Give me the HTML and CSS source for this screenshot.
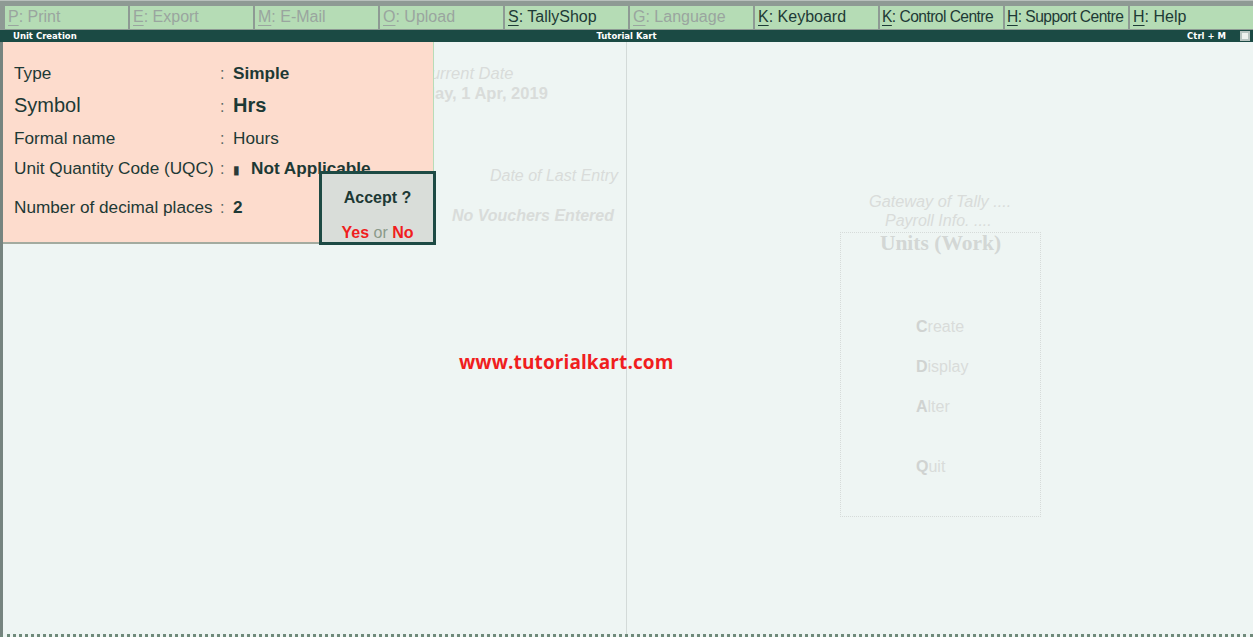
FILE: index.html
```html
<!DOCTYPE html>
<html>
<head>
<meta charset="utf-8">
<link rel="stylesheet" href="styles.css">
</head>
<body>
<div class="app">
  <div class="toolbar">
    <div class="btn off"><u>P</u>: Print</div>
    <div class="btn off"><u>E</u>: Export</div>
    <div class="btn off"><u>M</u>: E-Mail</div>
    <div class="btn off"><u>O</u>: Upload</div>
    <div class="btn"><u>S</u>: TallyShop</div>
    <div class="btn off"><u>G</u>: Language</div>
    <div class="btn"><u>K</u>: Keyboard</div>
    <div class="btn tight"><u>K</u>: Control Centre</div>
    <div class="btn tight"><u>H</u>: Support Centre</div>
    <div class="btn"><u>H</u>: Help</div>
  </div>
  <div class="titlebar">
    <span class="t-left">Unit Creation</span>
    <span class="t-center">Tutorial Kart</span>
    <span class="t-right">Ctrl + M</span>
    <span class="t-box"></span>
  </div>
  <div class="main">
    <div class="col left">
      <div class="faded cur-date">Current Date</div>
      <div class="faded cur-date-val">Monday, 1 Apr, 2019</div>
      <div class="faded last-entry">Date of Last Entry</div>
      <div class="faded no-vouchers">No Vouchers Entered</div>
      <div class="watermark">www.tutorialkart.com</div>
    </div>
    <div class="col right">
      <div class="faded gw1">Gateway of Tally ....</div>
      <div class="faded gw2">Payroll Info. ....</div>
      <div class="menu">
        <div class="menu-title">Units (Work)</div>
        <div class="menu-items">
          <div class="mi"><b>C</b>reate</div>
          <div class="mi"><b>D</b>isplay</div>
          <div class="mi"><b>A</b>lter</div>
          <div class="mi quit"><b>Q</b>uit</div>
        </div>
      </div>
    </div>

    <div class="panel">
      <div class="row"><span class="lbl">Type</span><span class="colon">:</span><span class="val bold">Simple</span></div>
      <div class="row big"><span class="lbl">Symbol</span><span class="colon">:</span><span class="val bold">Hrs</span></div>
      <div class="row short"><span class="lbl">Formal name</span><span class="colon">:</span><span class="val">Hours</span></div>
      <div class="row"><span class="lbl">Unit Quantity Code (UQC)</span><span class="colon">:</span><span class="val bold"><span class="bar">&#9646;</span>Not Applicable</span></div>
      <div class="row gap"><span class="lbl">Number of decimal places</span><span class="colon">:</span><span class="val bold">2</span></div>
    </div>
    <div class="accept">
      <div class="acc-title">Accept ?</div>
      <div class="acc-opts"><span class="red">Yes</span> <span class="or">or</span> <span class="red">No</span></div>
    </div>
  </div>
</div>
</body>
</html>
```
FILE: styles.css
```css
* { box-sizing: border-box; }
html, body { margin: 0; padding: 0; }
body {
  width: 1253px;
  height: 637px;
  overflow: hidden;
  background: #eef5f3;
  font-family: "Liberation Sans", Arial, sans-serif;
}
.app {
  width: 1253px;
  height: 637px;
  display: flex;
  flex-direction: column;
}
.toolbar {
  height: 30px;
  display: flex;
  gap: 2px;
  padding: 5px 0 2px 5px;
  background: #8e9a94;
  border-top: 1px solid #b8c0bc;
}
.btn {
  width: 123px;
  height: 23px;
  background: #b5dcb5;
  color: #1e3a36;
  font-size: 16px;
  line-height: 22px;
  padding-left: 3px;
  white-space: nowrap;
  overflow: hidden;
}
.btn.tight { letter-spacing: -0.55px; font-size: 15.6px; padding-left: 2px; }
.btn.off { color: #9aa59f; }
.btn u { text-decoration-thickness: 1px; text-underline-offset: 3px; }
.titlebar {
  height: 12px;
  background: #1b4a44;
  color: #ffffff;
  font-family: Verdana, "DejaVu Sans", sans-serif;
  font-size: 8.5px;
  font-weight: bold;
  line-height: 12px;
  display: flex;
  align-items: center;
  position: relative;
  padding-left: 13px;
}
.t-left { flex: 1; }
.t-center {
  position: absolute;
  left: 0; right: 0;
  text-align: center;
  top: 0;
}
.t-right { margin-right: 14px; }
.t-box {
  width: 10px;
  height: 10px;
  background: #eef2ee;
  border: 2px solid #b8c4c0;
  margin-right: 3px;
}
.main {
  flex: 1;
  display: flex;
  position: relative;
  border-left: 3px solid #76847f;
  border-bottom: 3px dotted #6f8a7a;
}
.col { position: relative; }
.col.left {
  width: 624px;
  border-right: 1px solid #d3dad8;
  display: flex;
  flex-direction: column;
  align-items: flex-end;
  padding-right: 8px;
}
.col.right {
  flex: 1;
  display: flex;
  flex-direction: column;
  padding-left: 213px;
}
.faded { color: #d9dcda; font-size: 16px; white-space: nowrap; }
.cur-date { font-style: italic; position: absolute; left: 416px; top: 22px; font-size: 16.5px; }
.cur-date-val { font-weight: bold; position: absolute; left: 388px; top: 42px; font-size: 16.5px; }
.last-entry { font-style: italic; margin-top: 125px; }
.no-vouchers { font-style: italic; font-weight: bold; margin-top: 22px; margin-right: 4px; }
.watermark {
  align-self: flex-start;
  margin-left: 456px;
  margin-top: 124px;
  color: #f01e1e;
  font-family: "Open Sans", sans-serif;
  font-weight: bold;
  font-size: 19px;
  letter-spacing: 0.1px;
}
.gw1 { font-style: italic; margin-top: 150px; margin-left: 29px; font-size: 16.3px; }
.gw2 { font-style: italic; margin-left: 45px; margin-top: 1px; font-size: 16px; }
.menu {
  width: 201px;
  height: 285px;
  border: 1px dotted #d6dbd9;
  margin-top: 2px;
  display: flex;
  flex-direction: column;
}
.menu-title {
  font-family: "Liberation Serif", "Times New Roman", serif;
  font-weight: bold;
  font-size: 21.5px;
  color: #d3d7d5;
  text-align: center;
  line-height: 20px;
  margin-top: 0;
}
.menu-items {
  padding-left: 75px;
  margin-top: 64px;
  display: flex;
  flex-direction: column;
  gap: 21px;
}
.mi { color: #d9dcda; font-size: 16px; line-height: 19px; }
.mi b { color: #d0d3d1; }
.mi.quit { margin-top: 20px; }
.panel {
  position: absolute;
  left: 0;
  top: 0;
  width: 431px;
  height: 202px;
  background: #fddccd;
  border-bottom: 2px solid #a3ab9f;
  border-right: 1px solid #b8dcb8;
  padding: 20px 0 0 11px;
  color: #1d3935;
}
.row {
  display: flex;
  align-items: baseline;
  font-size: 17.2px;
  height: 31px;
  line-height: 22px;
}
.row.short { height: 30px; }
.row.big { font-size: 20px; height: 34px; line-height: 24px; }
.row.big .lbl { font-size: 20px; }
.row.gap { margin-top: 8px; }
.lbl { width: 206px; white-space: nowrap; }
.colon { width: 13px; font-size: 16px; color: #5c6a66; }
.val { white-space: nowrap; }
.bold { font-weight: bold; }
.bar { font-size: 12px; color: #2a3a38; margin-right: 11px; font-weight: normal; }
.accept {
  position: absolute;
  left: 316px;
  top: 129px;
  width: 117px;
  height: 74px;
  background: #d9ddd9;
  border: 3px solid #1d4a44;
  text-align: center;
  color: #1d3935;
}
.acc-title { font-size: 16px; font-weight: bold; margin-top: 15px; }
.acc-opts { font-size: 16px; margin-top: 17px; }
.red { color: #f01e1e; font-weight: bold; }
.or { color: #8a9a8a; }
```
